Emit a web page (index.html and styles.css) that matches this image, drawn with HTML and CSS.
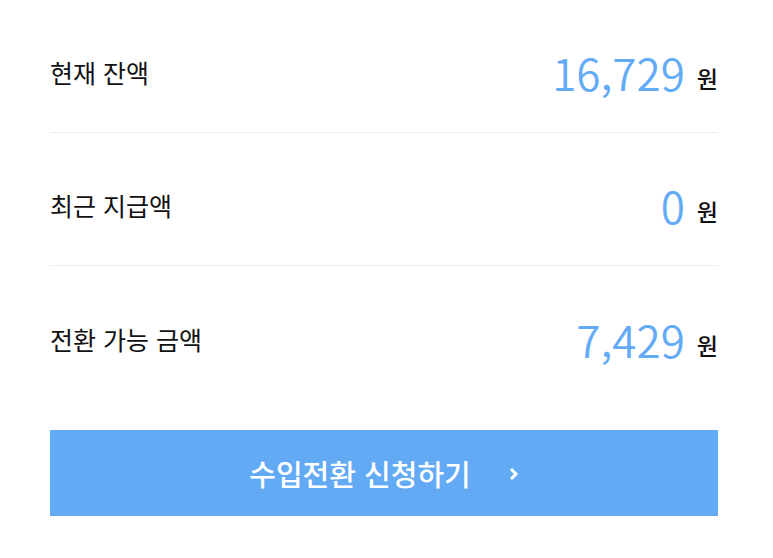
FILE: index.html
```html
<!DOCTYPE html>
<html lang="ko">
<head>
    <meta charset="UTF-8">
    <meta name="viewport" content="width=device-width, initial-scale=1.0">
    <title>수입전환</title>
    <link rel="stylesheet" href="styles.css">
</head>
<body>
    <div class="wallet">
        <div class="row">
            <span class="label">현재 잔액</span>
            <span class="amount"><b>16,729</b><span class="unit">원</span></span>
        </div>
        <div class="row">
            <span class="label">최근 지급액</span>
            <span class="amount"><b>0</b><span class="unit">원</span></span>
        </div>
        <div class="row">
            <span class="label">전환 가능 금액</span>
            <span class="amount"><b>7,429</b><span class="unit">원</span></span>
        </div>
        <button class="apply">수입전환 신청하기
            <svg class="arrow" width="10" height="14" viewBox="0 0 10 14"><path d="M2 2 L7 7 L2 12" fill="none" stroke="#fff" stroke-width="3"/></svg>
        </button>
    </div>
</body>
</html>
```

FILE: styles.css
```css
body { margin: 0; background: #fff; font-family: "Noto Sans CJK KR", "Noto Sans", sans-serif; color: #111; }
.wallet { width: 668px; margin: 0 0 0 50px; }
.row { display: flex; justify-content: space-between; align-items: center; height: 133px; box-sizing: border-box; padding-top: 12px; border-bottom: 1px solid #eaeef2; }
.row:last-of-type { border-bottom: none; }
.label { font-size: 25px; font-weight: 400; }
.amount { font-size: 23px; font-weight: 500; white-space: nowrap; }
.amount b { font-size: 44px; font-weight: 350; color: #64abf5; margin-right: 12px; }
.unit { vertical-align: 3px; }
.apply { display: flex; align-items: center; justify-content: center; width: 100%; height: 86px; margin-top: 31px; border: none; background: #63aaf5; color: #fff; font-family: inherit; font-size: 29px; font-weight: 500; cursor: pointer; padding: 0; }
.arrow { margin-left: 38px; margin-top: 2px; }
```
